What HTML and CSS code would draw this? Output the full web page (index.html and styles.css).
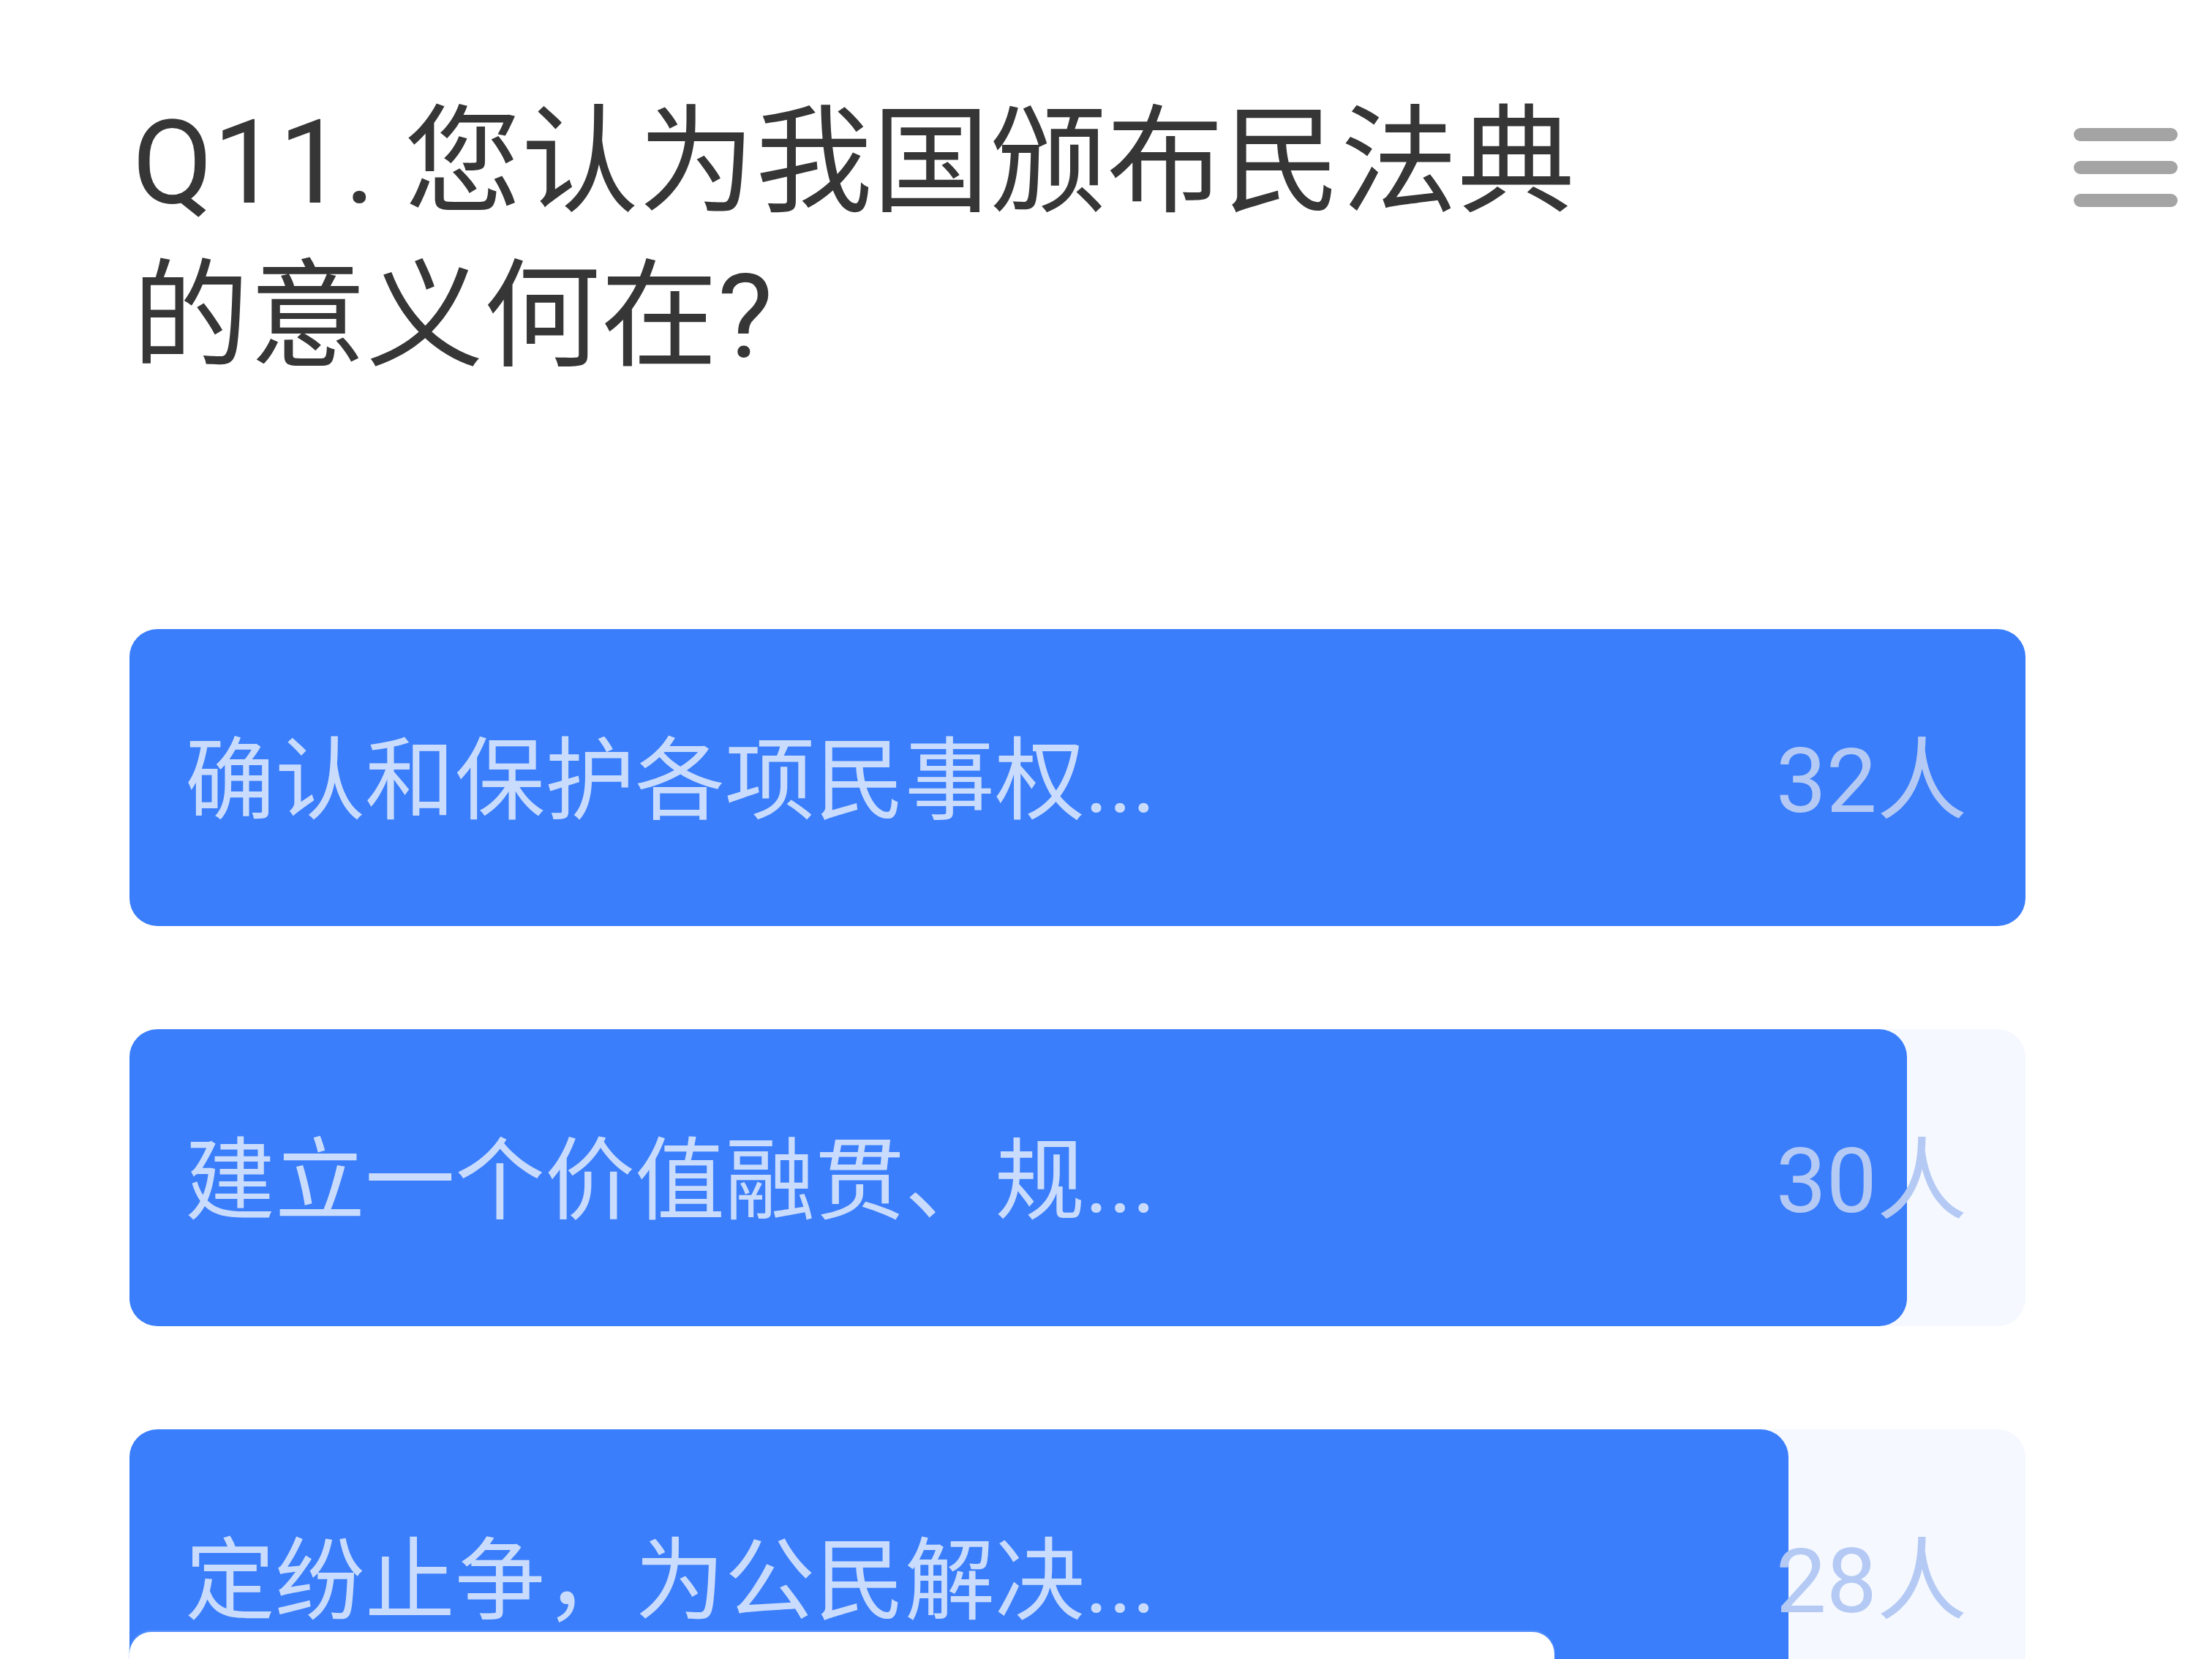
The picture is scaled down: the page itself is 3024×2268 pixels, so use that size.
FILE: index.html
```html
<!DOCTYPE html>
<html lang="zh-CN">
<head>
    <meta charset="UTF-8">
    <title>投票结果</title>
    <link rel="stylesheet" href="styles.css">
</head>
<body>
    <div class="page">
        <div class="header">
            <h1 class="title">Q11. 您认为我国颁布民法典的意义何在?</h1>
            <button class="menu-btn" aria-label="菜单">
                <span></span>
                <span></span>
                <span></span>
            </button>
        </div>

        <div class="options">
            <div class="option">
                <div class="fill" style="width: 100%"></div>
                <div class="row">
                    <span class="label">确认和保护各项民事权...</span>
                    <span class="count">32人</span>
                </div>
            </div>
            <div class="option">
                <div class="fill" style="width: 93.75%"></div>
                <div class="row">
                    <span class="label">建立一个价值融贯、规...</span>
                    <span class="count">30人</span>
                </div>
            </div>
            <div class="option">
                <div class="fill" style="width: 87.5%"></div>
                <div class="row">
                    <span class="label">定纷止争，为公民解决...</span>
                    <span class="count">28人</span>
                </div>
            </div>
        </div>
    </div>

    <div class="sheet"></div>
</body>
</html>
```

FILE: styles.css
```css
body {
    margin: 0;
    background: #fff;
    font-family: Roboto, "Noto Sans CJK SC", sans-serif;
    overflow: hidden;
    height: 2268px;
    position: relative;
}

.page {
    padding: 117px 47px 0 177px;
}

.header {
    display: flex;
    justify-content: space-between;
    align-items: flex-start;
}

.title {
    margin: 0;
    max-width: 2050px;
    font-size: 160px;
    line-height: 211px;
    font-weight: normal;
    color: #363636;
    padding-left: 4px;
}

.menu-btn {
    margin-top: 58px;
    width: 142px;
    padding: 0;
    border: none;
    background: none;
    display: flex;
    flex-direction: column;
    gap: 27px;
}

.menu-btn span {
    display: block;
    height: 18px;
    border-radius: 9px;
    background: #a4a4a4;
}

.options {
    margin-top: 321px;
    width: 2592px;
    display: flex;
    flex-direction: column;
    gap: 141px;
}

.option {
    display: grid;
    height: 406px;
    border-radius: 38px;
    background: #f5f8ff;
}

.fill,
.row {
    grid-area: 1 / 1;
}

.fill {
    background: #3a7efc;
    border-radius: 38px;
}

.row {
    display: flex;
    justify-content: space-between;
    align-items: center;
    padding: 0 80px 14px 76px;
    font-size: 123px;
}

.label {
    color: #cadcfd;
}

.count {
    color: #b4caf4;
}

.sheet {
    position: absolute;
    left: 177px;
    top: 2231px;
    width: 1948px;
    height: 120px;
    background: #fff;
    border-radius: 30px 30px 0 0;
    box-shadow: 0 -2px 3px rgba(120, 170, 255, 0.5);
}
```
